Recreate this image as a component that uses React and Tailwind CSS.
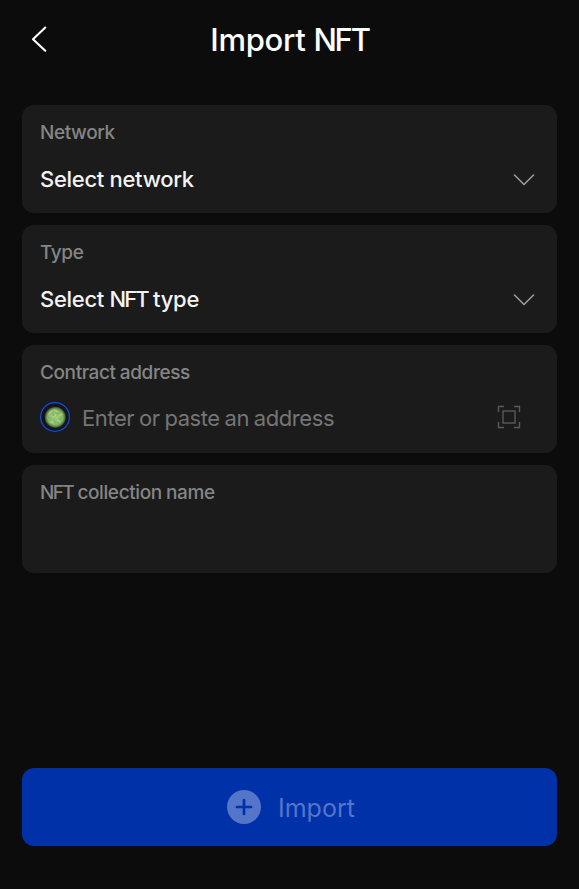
function ChevronDown() {
  return (
    <svg className="mt-[2px] h-[14px] w-[24px] text-[#9b9b9b]" viewBox="0 0 24 14" fill="none" stroke="currentColor" strokeWidth="1.6" strokeLinecap="round" strokeLinejoin="round">
      <path d="M2.5 2 L12 11.5 L21.5 2" />
    </svg>
  );
}

function Field({ label, children }) {
  return (
    <div className="h-[108px] rounded-[12px] bg-[#1b1b1b] px-[18px] pt-[16px]">
      <div className="h-6 text-[19px] leading-6 font-[450] tracking-[-0.4px] whitespace-nowrap text-[#858585] [word-spacing:-0.4px]">{label}</div>
      {children}
    </div>
  );
}

function SelectRow({ children }) {
  return (
    <div className="mt-5 flex h-7 items-center justify-between pr-[3px]">
      <span className="text-[22px] leading-7 font-[450] tracking-[-0.3px] whitespace-nowrap text-[#f3f3f3]">{children}</span>
      <ChevronDown />
    </div>
  );
}

function Avatar() {
  return (
    <svg className="size-[30px] shrink-0" viewBox="0 0 30 30" fill="none">
      <defs>
        <radialGradient id="orb">
          <stop offset="0" stopColor="#9bc972" />
          <stop offset="0.68" stopColor="#86b767" />
          <stop offset="0.85" stopColor="#5b7a4a" />
          <stop offset="1" stopColor="#151515" />
        </radialGradient>
      </defs>
      <circle cx="15" cy="15" r="14.4" fill="#151515" stroke="#0b4df5" strokeWidth="1.2" />
      <circle cx="15.3" cy="15.3" r="11" fill="url(#orb)" />
      <g strokeWidth="1.2" strokeLinecap="round" opacity="0.75">
        <path d="M9 12l3-3M14 8l4 2M19 14l3-2M10 20l3 1M17 18l3 2M13 15l3-2" stroke="#cfd96f" />
        <path d="M8 16l3-1M12 12l2 1M17 12l2-2M14 18l1 2M20 17l2-1M18 22l1-1" stroke="#5cba80" />
        <path d="M10 14l2 0M16 16l2-1M13 20l-1-1" stroke="#a8de9a" />
      </g>
    </svg>
  );
}

function ScanIcon() {
  return (
    <svg className="size-6 text-[#595959]" viewBox="0 0 24 24" fill="none" stroke="currentColor" strokeWidth="1.4">
      <path d="M1.5 7V1.5H7M17 1.5h5.5V7M22.5 17v5.5H17M7 22.5H1.5V17" />
      <rect x="6" y="6" width="12" height="12" />
    </svg>
  );
}

export default function App() {
  return (
    <div className="flex h-[889px] w-[579px] flex-col bg-[#0c0c0c] px-[22px] font-['Inter',sans-serif]">
      <header className="grid h-[105px] grid-cols-[40px_1fr_40px] items-start">
        <svg className="mt-[25px] ml-[8px] h-7 w-[18px] text-white" viewBox="0 0 18 28" fill="none" stroke="currentColor" strokeWidth="2.1" strokeLinecap="round" strokeLinejoin="round">
          <path d="M15.3 2.5L3 14.2L15.3 25.7" />
        </svg>
        <h1 className="mt-[20px] text-center text-[31px] leading-10 font-[550] tracking-[-0.3px] whitespace-nowrap text-white">
          Import <span className="tracking-[-2.2px]">NFT</span>
        </h1>
      </header>
      <main className="flex flex-col gap-3">
        <Field label="Network">
          <SelectRow>Select network</SelectRow>
        </Field>
        <Field label="Type">
          <SelectRow>
            Select <span className="tracking-[-2px]">NFT</span> type
          </SelectRow>
        </Field>
        <Field label="Contract address">
          <div className="mt-[17px] flex h-[30px] items-center pr-[18px]">
            <Avatar />
            <span className="ml-3 flex-1 pt-[2px] text-[22px] leading-7 tracking-[-0.42px] whitespace-nowrap text-[#757575] [word-spacing:-1px]">Enter or paste an address</span>
            <ScanIcon />
          </div>
        </Field>
        <Field
          label={
            <>
              <span className="tracking-[-1.6px]">NFT</span> collection name
            </>
          }
        />
      </main>
      <button className="mt-[195px] flex h-[78px] shrink-0 items-center rounded-[12px] bg-[#0031a9] pl-[205px] text-[#5475c8]">
        <svg className="size-[34px]" viewBox="0 0 34 34" fill="none">
          <circle cx="17" cy="17" r="17" fill="#5475c8" />
          <path d="M17 10v14M10 17h14" stroke="#0031a9" strokeWidth="2.7" strokeLinecap="round" />
        </svg>
        <span className="ml-[17px] pt-[2px] text-[25px] leading-8 whitespace-nowrap">Import</span>
      </button>
    </div>
  );
}
